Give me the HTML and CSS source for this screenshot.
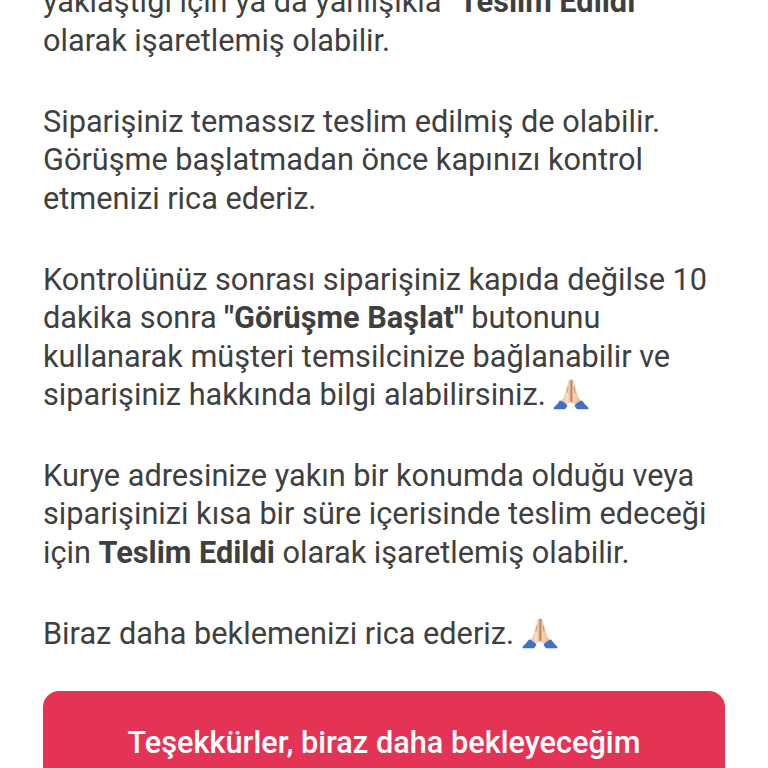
FILE: index.html
```html
<!DOCTYPE html>
<html lang="tr">
<head>
  <meta charset="UTF-8" />
  <meta name="viewport" content="width=device-width, initial-scale=1.0"/>
  <title>Sipariş Yardım</title>
  <link rel="stylesheet" href="styles.css">
</head>
<body>
  <!-- folded hands, shared by the message paragraphs -->
  <svg class="sprite" aria-hidden="true">
    <defs>
      <linearGradient id="skin" x1="0" x2="1" y1="0" y2="0">
        <stop offset="0" stop-color="#e6bd9c"/>
        <stop offset=".35" stop-color="#f7dfc6"/>
        <stop offset=".48" stop-color="#e5b48d"/>
        <stop offset=".52" stop-color="#c08a65"/>
        <stop offset=".6" stop-color="#f3d2b3"/>
        <stop offset="1" stop-color="#e3b794"/>
      </linearGradient>
    </defs>
    <symbol id="hands" viewBox="0 0 36 31">
      <path fill="url(#skin)" d="M15.600 1.200Q18 -.3 20.400 1.200L23.200 11Q24 15.500 25.500 19L29.500 23.500 24.500 28 18 22.800 11.500 28 6.500 23.500 10.500 19Q12 15.500 12.800 11Z"/>
      <path fill="none" stroke="#a87453" stroke-width=".6" d="M18 2V22.500M15 7.500 13.900 14M21 7.500 22.100 14"/>
      <path fill="#4270c8" d="M6.800 21.500Q12 22.500 14.500 27L12 30.200H.6Q.2 29 1.200 28Q4.500 25.500 6.800 21.500ZM29.200 21.500Q24 22.500 21.500 27L24 30.200H35.400Q35.800 29 34.800 28Q31.500 25.500 29.200 21.500Z"/>
    </symbol>
  </svg>

  <main class="message">
    <p>yaklaştığı için ya da yanlışıkla "<strong>Teslim Edildi</strong>"<br>olarak işaretlemiş olabilir.</p>
    <p>Siparişiniz temassız teslim edilmiş de olabilir.<br>Görüşme başlatmadan önce kapınızı kontrol<br>etmenizi rica ederiz.</p>
    <p>Kontrolünüz sonrası siparişiniz kapıda değilse 10<br>dakika sonra <strong>"Görüşme Başlat"</strong> butonunu<br>kullanarak müşteri temsilcinize bağlanabilir ve<br>siparişiniz hakkında bilgi alabilirsiniz. <svg class="emoji"><use href="#hands"/></svg></p>
    <p>Kurye adresinize yakın bir konumda olduğu veya<br>siparişinizi kısa bir süre içerisinde teslim edeceği<br>için <strong>Teslim Edildi</strong> olarak işaretlemiş olabilir.</p>
    <p>Biraz daha beklemenizi rica ederiz. <svg class="emoji"><use href="#hands"/></svg></p>
    <button class="action">Teşekkürler, biraz daha bekleyeceğim</button>
  </main>
</body>
</html>
```
FILE: styles.css
```css
* {
  margin: 0;
  padding: 0;
  box-sizing: border-box;
}

body {
  height: 768px;
  overflow: hidden;
  background: #fff;
  color: #3f3f3f;
  font-family: Roboto, sans-serif;
}

.sprite {
  display: block;
  width: 0;
  height: 0;
}

.message {
  margin-top: -16.7px;
  padding: 0 43px;
  font-size: 30.7px;
  line-height: 38.5px;
  white-space: nowrap;
}

.message p {
  margin-bottom: 42.4px;
}

.message p:last-of-type {
  margin-bottom: 37.5px;
}

.emoji {
  width: 36px;
  height: 31px;
  margin: -6px 0;
  vertical-align: 1px;
}

.action {
  display: block;
  width: 100%;
  height: 104px;
  border: none;
  border-radius: 16px;
  background: #e43354;
  color: #fff;
  font: 500 30.7px Roboto, sans-serif;
}
```
